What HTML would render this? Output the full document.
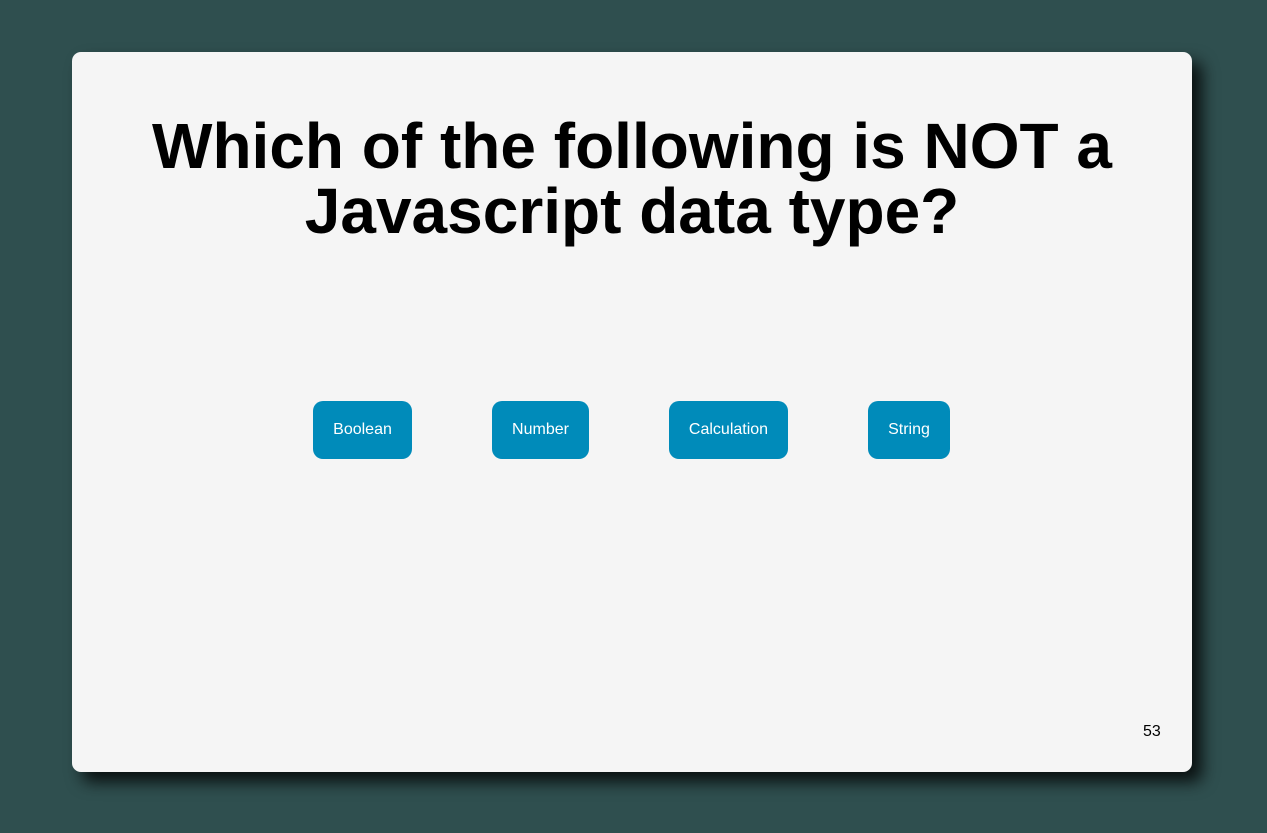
<!DOCTYPE html>
<html><head><style>
html,body{margin:0;padding:0}
body{width:1267px;height:833px;background:#2f4f4f;font-family:"Liberation Sans",Arial,sans-serif;position:relative;overflow:hidden}
.card{position:absolute;left:72px;top:52px;width:1120px;height:720px;background:#f5f5f5;border-radius:9px;box-shadow:10px 10px 16px rgba(0,0,0,0.8)}
h1{position:absolute;left:0;right:0;top:114px;margin:0;text-align:center;font-size:64px;line-height:65px;font-weight:bold;color:#000;padding-right:3px}
.btn{position:absolute;top:401px;height:58px;line-height:58px;background:#008bba;color:#fff;font-size:16px;border-radius:10px;text-align:center}
.num{position:absolute;left:1143px;top:723px;font-size:16px;color:#000}
</style></head><body>
<div class="card"></div>
<h1>Which of the following is NOT a<br>Javascript data type?</h1>
<div class="btn" style="left:313px;width:99px">Boolean</div>
<div class="btn" style="left:492px;width:97px">Number</div>
<div class="btn" style="left:669px;width:119px">Calculation</div>
<div class="btn" style="left:868px;width:82px">String</div>
<div class="num">53</div>
</body></html>
